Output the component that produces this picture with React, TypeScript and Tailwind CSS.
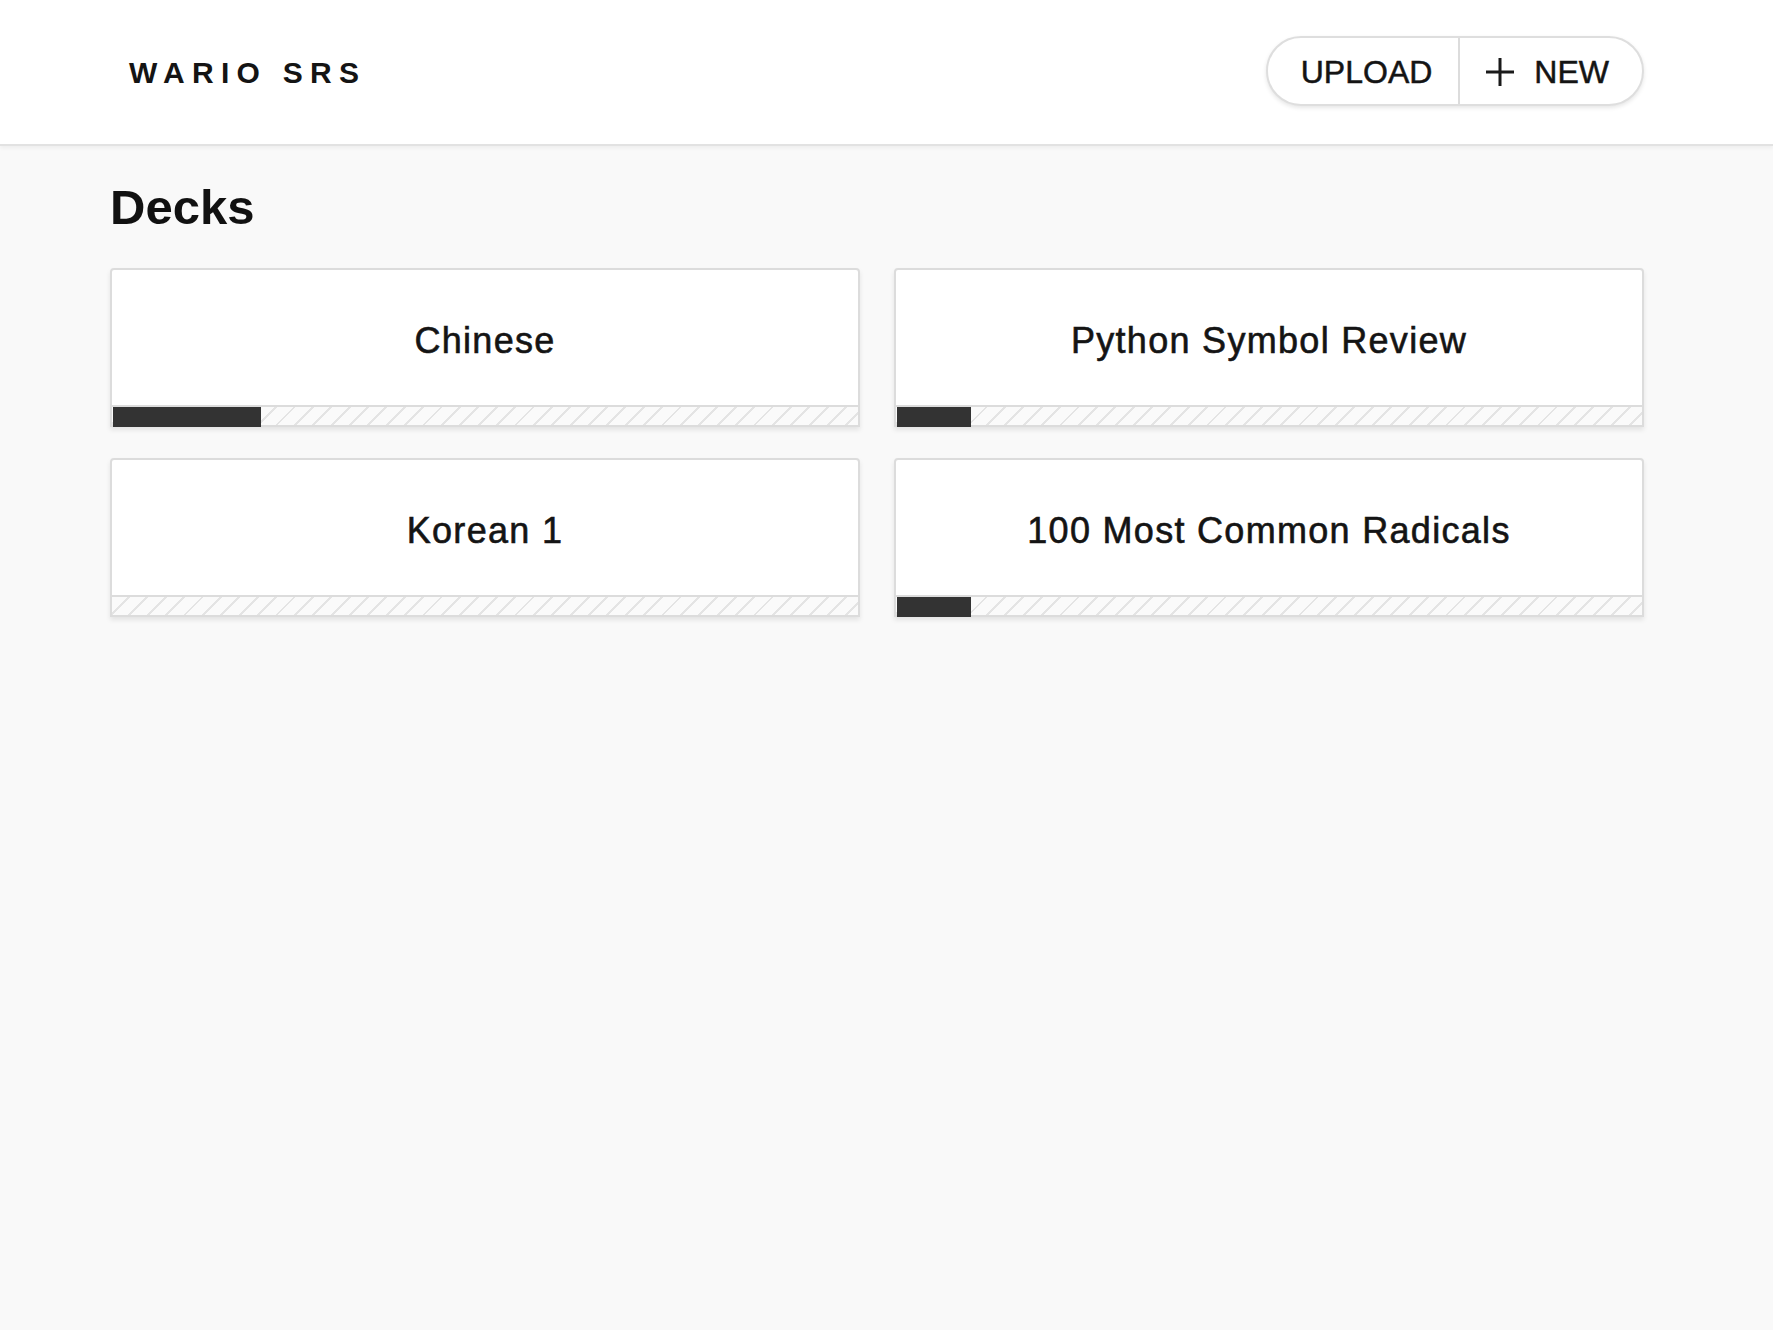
import React from "react";

type Deck = { name: string; progress: number };

const decks: Deck[] = [
  { name: "Chinese", progress: 19.8 },
  { name: "Python Symbol Review", progress: 9.9 },
  { name: "Korean 1", progress: 0 },
  { name: "100 Most Common Radicals", progress: 9.9 },
];

const PlusIcon = () => (
  <svg width="30" height="30" viewBox="0 0 30 30" className="shrink-0">
    <path d="M15 1v28M1 15h28" stroke="#1a1a1a" strokeWidth="3" fill="none" />
  </svg>
);

const DeckCard = ({ deck }: { deck: Deck }) => {
  return (
    <div className="bg-white border-2 border-[#dcdcdc] rounded-t-[4px] shadow-[0_3px_5px_rgba(0,0,0,0.09)] cursor-pointer">
      <div className="h-[135px] pt-[6px] flex items-center justify-center text-[36px] tracking-[1.3px] text-[#141414] [-webkit-text-stroke:0.6px_#141414]">
        {deck.name}
      </div>
      <div className="relative h-[20px] border-t-2 border-[#dcdcdc] bg-[repeating-linear-gradient(135deg,#fafafa_0px,#fafafa_11px,#e4e4e4_11px,#e4e4e4_13px)]">
        {deck.progress > 0 && (
          <div
            className="absolute left-[1px] top-0 h-[20px] bg-[#333333]"
            style={{ width: `${deck.progress}%` }}
          />
        )}
      </div>
    </div>
  );
};

const App = () => {
  return (
    <div className="min-h-screen bg-[#f9f9f9] font-['Liberation_Sans',Arial,sans-serif] text-[#111]">
      <div className="bg-white h-[146px] border-b-2 border-[#e2e2e2] shadow-[0_2px_4px_rgba(0,0,0,0.05)]">
        <div className="w-[1534px] ml-[110px] h-full flex items-center justify-between">
          <div className="pl-[19px] text-[30px] font-bold tracking-[7.3px] text-[#141414]">
            WARIO SRS
          </div>
          <div className="flex items-center h-[70px] border-2 border-[#dedede] rounded-full bg-white shadow-[0_2px_4px_rgba(0,0,0,0.1)] mt-[-3px] text-[32px] text-[#141414] [-webkit-text-stroke:0.5px_#141414]">
            <button className="h-full pl-[33px] pr-[26px] pt-[3px] border-r-2 border-[#dcdcdc]">
              UPLOAD
            </button>
            <button className="h-full pl-[25px] pr-[33px] pt-[3px] flex items-center gap-[19px]">
              <PlusIcon />
              NEW
            </button>
          </div>
        </div>
      </div>
      <div className="w-[1534px] ml-[110px]">
        <h1 className="mt-[37px] text-[49px] font-bold leading-none text-[#111]">Decks</h1>
        <div className="mt-[36px] grid grid-cols-2 gap-x-[34px] gap-y-[31px]">
          {decks.map((d) => (
            <DeckCard key={d.name} deck={d} />
          ))}
        </div>
      </div>
    </div>
  );
};

export default App;
